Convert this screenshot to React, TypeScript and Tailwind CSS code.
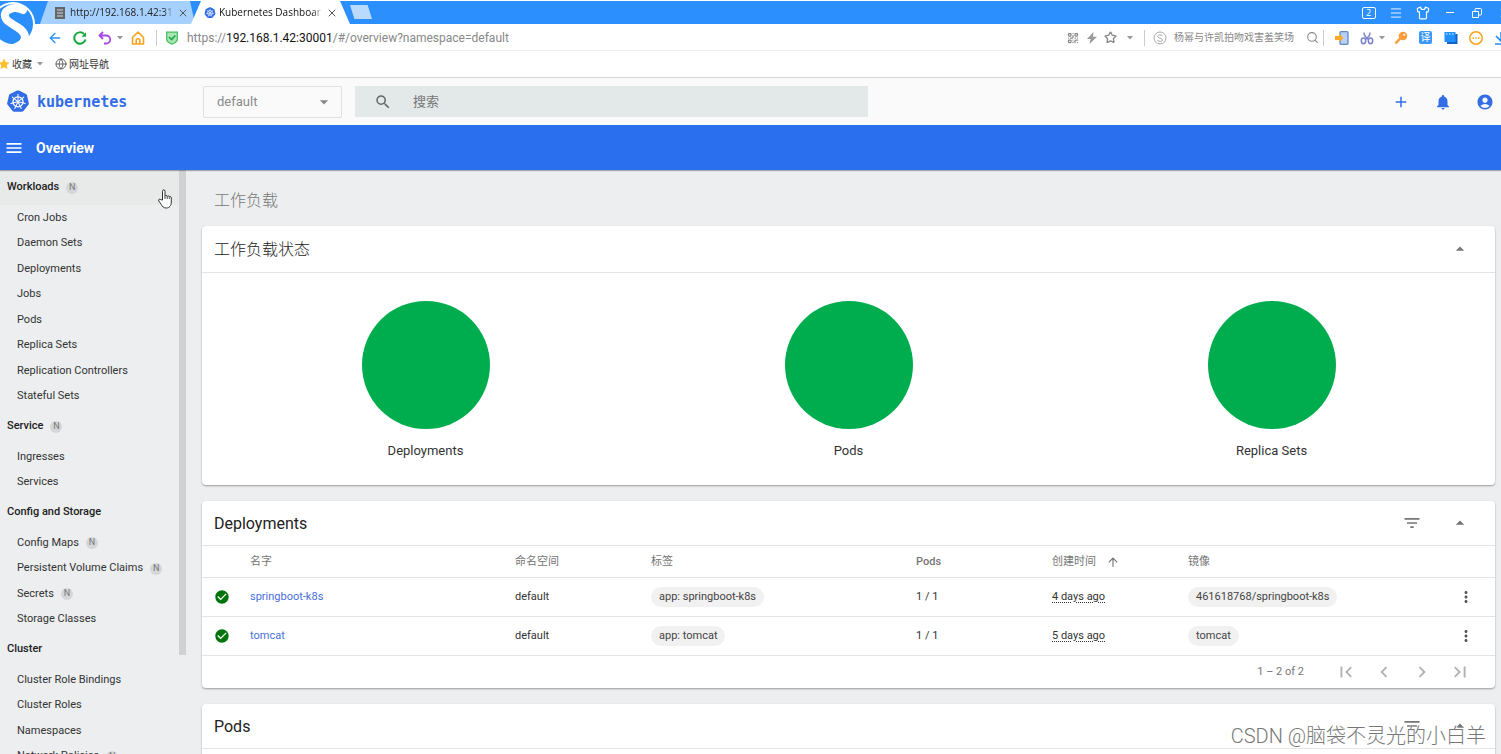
import React from 'react';
import {
  MdAccountCircle,
  MdAdd,
  MdArrowDropDown,
  MdArrowDropUp,
  MdArrowUpward,
  MdCheckCircle,
  MdChevronLeft,
  MdChevronRight,
  MdFilterList,
  MdFirstPage,
  MdLastPage,
  MdMenu,
  MdMoreVert,
  MdNotifications,
  MdSearch,
} from 'react-icons/md';
import { ArrowLeft, Globe, Menu, QrCode, Search, Shirt, Star, X } from 'lucide-react';

const UI_FONT = "font-['Open_Sans','Noto_Sans_CJK_SC',sans-serif]";
const APP_FONT = "font-['Roboto','Noto_Sans_CJK_SC',sans-serif]";

const navGroups = [
  {
    title: 'Workloads',
    badge: true,
    active: true,
    items: [
      { label: 'Cron Jobs' },
      { label: 'Daemon Sets' },
      { label: 'Deployments' },
      { label: 'Jobs' },
      { label: 'Pods' },
      { label: 'Replica Sets' },
      { label: 'Replication Controllers' },
      { label: 'Stateful Sets' },
    ],
  },
  {
    title: 'Service',
    badge: true,
    items: [{ label: 'Ingresses' }, { label: 'Services' }],
  },
  {
    title: 'Config and Storage',
    items: [
      { label: 'Config Maps', badge: true },
      { label: 'Persistent Volume Claims', badge: true },
      { label: 'Secrets', badge: true },
      { label: 'Storage Classes' },
    ],
  },
  {
    title: 'Cluster',
    items: [
      { label: 'Cluster Role Bindings' },
      { label: 'Cluster Roles' },
      { label: 'Namespaces' },
      { label: 'Network Policies', badge: true },
    ],
  },
];

const deployments = [
  { name: 'springboot-k8s', label: 'app: springboot-k8s', age: '4 days ago', image: '461618768/springboot-k8s' },
  { name: 'tomcat', label: 'app: tomcat', age: '5 days ago', image: 'tomcat' },
];

const SPOKES = [0, 51, 103, 154, 206, 257, 309];

const KubeLogo = ({ className }: { className: string }) => (
  <svg viewBox="0 0 24 24" className={className} aria-hidden="true">
    <path
      d="M12 .4c.4 0 .7.1 1 .2l7 3.400c.6.3.9.7 1 1.300l1.800 7.800c.1.6 0 1.200-.4 1.700l-5 6.300c-.4.5-.9.7-1.500.7H8.100c-.6 0-1.100-.2-1.500-.7l-5-6.300c-.4-.5-.5-1.100-.4-1.700L3 5.300c.1-.6.4-1 1-1.300L11 .6c.3-.1.6-.2 1-.2z"
      fill="#326de6"
    />
    <circle cx="12" cy="11.800" r="5" fill="none" stroke="#fff" strokeWidth="1.300" />
    {SPOKES.map((a) => (
      <path key={a} d="M12 10.500V4.400" stroke="#fff" strokeWidth="1" strokeLinecap="round" transform={`rotate(${a} 12 11.800)`} />
    ))}
    <circle cx="12" cy="11.800" r="1.400" fill="#fff" />
  </svg>
);

const BrowserLogo = () => (
  <svg viewBox="0 0 40 48" className="absolute left-0 top-0 z-10 h-12 w-10" aria-hidden="true">
    <circle cx="13" cy="24" r="22" fill="#fff" />
    <circle cx="13" cy="24" r="20" fill="#2b8ffb" />
    <path
      d="M23 10C13 5 1 11 6 19c4 6 19 9 19 18 0 5-4 8-9 10"
      fill="none"
      stroke="#fff"
      strokeWidth="8"
      strokeLinecap="round"
    />
  </svg>
);

const Badge = () => (
  <span className="ml-[7px] flex h-3 w-3 items-center justify-center rounded-full bg-[#d5d6d7] text-[9px] font-normal text-[#777]">
    N
  </span>
);

const Sidebar = () => (
  <aside className="flex w-[186px] shrink-0 overflow-hidden bg-[#eceef0]">
    <nav className="min-w-0 flex-1 text-[11px] text-[#333]">
      {navGroups.map((group) => (
        <div key={group.title}>
          <a
            href="#"
            className={`flex h-[35px] items-center pl-[7px] font-medium text-[#212121] ${group.active ? 'bg-[#e8e9e9]' : ''}`}
          >
            {group.title}
            {group.badge && <Badge />}
          </a>
          <ul>
            {group.items.map((item) => (
              <li key={item.label} className="odd:h-[26px] even:h-[25px]">
                <a href="#" className="flex h-full items-center pl-[17px]">
                  {item.label}
                  {item.badge && <Badge />}
                </a>
              </li>
            ))}
          </ul>
        </div>
      ))}
    </nav>
    <div className="w-[7px]">
      <div className="h-[83%] bg-[#d0d1d3]" />
    </div>
  </aside>
);

const CardHeader = ({ title, filter, tall }: { title: string; filter?: boolean; tall?: boolean }) => (
  <header
    className={`flex items-center border-b border-[#e4e4e4] pl-3 pr-[11px] ${tall ? 'h-[47px] font-light' : 'h-[45px]'}`}
  >
    <h2 className="flex-1 pt-0.5 text-base text-[#222]">{title}</h2>
    {filter && (
      <button aria-label="Filter" className="flex w-12 justify-center text-[#757575]">
        <MdFilterList className="h-5 w-5" />
      </button>
    )}
    <button aria-label="Collapse" className="flex w-12 justify-center text-[#757575]">
      <MdArrowDropUp className="h-5 w-5" />
    </button>
  </header>
);

const Card = ({ children }: { children: React.ReactNode }) => (
  <section className="mb-4 rounded-sm bg-white shadow-[0_1px_2px_rgba(0,0,0,0.35)]">{children}</section>
);

const Chip = ({ children }: { children: React.ReactNode }) => (
  <span className="inline-flex h-5 items-center rounded-full bg-[#f1f1f1] px-2 text-[#444]">{children}</span>
);

const DeploymentsTable = () => (
  <table className="w-full table-fixed text-left text-[11px] text-[#333]">
    <thead>
      <tr className="h-8 border-b border-[#e4e4e4] text-[#757575]">
        <th className="w-12" />
        <th className="pt-0.5 font-normal">名字</th>
        <th className="w-[136px] pt-0.5 font-normal">命名空间</th>
        <th className="pt-0.5 font-normal">标签</th>
        <th className="w-[136px] pt-0.5 font-medium">Pods</th>
        <th className="w-[136px] pt-0.5 font-normal">
          <span className="flex items-center gap-2.5">
            创建时间 <MdArrowUpward className="h-3.5 w-3.5" />
          </span>
        </th>
        <th className="pt-0.5 font-normal">镜像</th>
        <th className="w-[42px]" />
      </tr>
    </thead>
    <tbody>
      {deployments.map((d) => (
        <tr key={d.name} className="h-[39px] border-b border-[#e4e4e4]">
          <td className="pl-3">
            <MdCheckCircle className="h-4 w-4 text-[#00740b]" />
          </td>
          <td>
            <a href="#" className="text-[#4a6fdc]">{d.name}</a>
          </td>
          <td>default</td>
          <td><Chip>{d.label}</Chip></td>
          <td>1 / 1</td>
          <td>
            <span className="underline decoration-dotted underline-offset-2">{d.age}</span>
          </td>
          <td><Chip>{d.image}</Chip></td>
          <td>
            <button aria-label={`Actions for ${d.name}`} className="flex w-[26px] justify-center text-[#555]">
              <MdMoreVert className="h-[18px] w-[18px]" />
            </button>
          </td>
        </tr>
      ))}
    </tbody>
  </table>
);

const Paginator = () => (
  <div className="flex h-8 items-center justify-end pr-4 text-[11px] text-[#757575]">
    <span className="mr-[23px]">1 – 2 of 2</span>
    {[
      { label: 'First page', icon: MdFirstPage },
      { label: 'Previous page', icon: MdChevronLeft },
      { label: 'Next page', icon: MdChevronRight },
      { label: 'Last page', icon: MdLastPage },
    ].map((b) => (
      <button key={b.label} aria-label={b.label} className="flex w-[38px] justify-center text-[#b0b0b0]">
        <b.icon className="h-[22px] w-[22px]" />
      </button>
    ))}
  </div>
);

const TitleBar = () => (
  <div className="flex h-6 overflow-hidden border-t border-white bg-[#2b90fe] pl-10 text-[10px]">
    <div className="flex w-[155px] items-center bg-[#a6d1fe] pl-[15px] text-[#222] [clip-path:polygon(0_100%,8px_0,150px_0,100%_100%)]">
      <svg viewBox="0 0 10 12" className="h-3 w-2.5 shrink-0" aria-hidden="true">
        <path d="M0 0h10v12H0z" fill="#666" />
        <path d="M2 3h6M2 6h6M2 9h6" stroke="#c6dcf2" />
      </svg>
      <span className="ml-[5px] w-[104px] whitespace-nowrap [mask-image:linear-gradient(to_right,#000_90%,transparent)]">
        http://192.168.1.42:31
      </span>
      <button aria-label="Close tab" className="ml-[3px] text-[#555]">
        <X className="h-3 w-3" />
      </button>
    </div>
    <div className="-ml-1 flex w-[159px] items-center bg-white pl-[13px] text-[#111] [clip-path:polygon(0_100%,10px_0,149px_0,100%_100%)]">
      <KubeLogo className="h-3 w-3 shrink-0" />
      <span className="ml-[3px] w-[104px] whitespace-nowrap [mask-image:linear-gradient(to_right,#000_90%,transparent)]">
        Kubernetes Dashboar
      </span>
      <button aria-label="Close tab" className="ml-[3px] text-[#555]">
        <X className="h-3 w-3" />
      </button>
    </div>
    <button
      aria-label="New tab"
      className="mt-1 h-3.5 w-[22px] bg-[#b9dafd] [clip-path:polygon(0_0,80%_0,100%_100%,20%_100%)]"
    />
    <div className="-mr-4 ml-auto flex items-center text-white">
      <span className="flex w-[27px] justify-center">
        <span className="flex h-3 w-3.5 items-center justify-center rounded-xs border border-white text-[9px]">2</span>
      </span>
      <button aria-label="Menu" className="flex w-[27px] justify-center">
        <Menu className="h-3.5 w-3.5" strokeWidth={1.5} />
      </button>
      <button aria-label="Skins" className="flex w-[27px] justify-center">
        <Shirt className="h-3.5 w-3.5" strokeWidth={2} />
      </button>
      <button aria-label="Minimize" className="flex w-[27px] justify-center">
        <span className="h-px w-2 bg-white" />
      </button>
      <button aria-label="Restore" className="flex w-[27px] justify-center">
        <svg viewBox="0 0 10 10" className="h-2.5 w-2.5" fill="none" stroke="#fff">
          <path d="M.5 3.500h6v6h-6zM3 3V1.500Q3 .5 4 .5h4.500q1 0 1 1V6q0 1-1 1H7" />
        </svg>
      </button>
      <button aria-label="Close" className="flex w-[27px] justify-center">
        <X className="h-3 w-3" />
      </button>
    </div>
  </div>
);

const Tool = ({ label, wide, children }: { label: string; wide?: boolean; children: React.ReactNode }) => (
  <button aria-label={label} className={`flex shrink-0 justify-center ${wide ? 'w-[25px]' : 'w-[19px]'}`}>
    {children}
  </button>
);

const Caret = () => (
  <svg viewBox="0 0 6 4" className="h-1 w-1.5 shrink-0" aria-hidden="true">
    <path d="M0 0h6L3 3.500z" fill="#999" />
  </svg>
);

const AddressBar = () => (
  <div className="flex h-[27px] items-center overflow-hidden border-b border-[#ececec] bg-white pl-[42px] pt-px">
    <Tool label="Back" wide>
      <ArrowLeft className="h-4 w-4 text-[#2b90fe]" />
    </Tool>
    <Tool label="Reload" wide>
      <svg viewBox="0 0 14 14" className="h-3.5 w-3.5" fill="none" stroke="#12a83a" strokeWidth="2">
        <path d="M12.500 8.500A5.700 5.700 0 1 1 11 3" />
        <path d="M8.500 5.800H13V1.200z" fill="#12a83a" stroke="none" />
      </svg>
    </Tool>
    <Tool label="Undo" wide>
      <svg viewBox="0 0 14 14" className="h-3.5 w-3.5" fill="none" stroke="#a548e8" strokeWidth="1.800">
        <path d="M5 1 1.500 4.500 5 8M1.500 4.500h6.700a4 4 0 0 1 0 8H6" />
      </svg>
    </Tool>
    <Caret />
    <span className="ml-0.5">
      <Tool label="Home" wide>
        <svg viewBox="0 0 14 14" className="h-3.5 w-3.5" fill="none" stroke="#fba31d" strokeWidth="1.600" strokeLinejoin="round">
          <path d="M1.500 6.500 7 1l5.500 5.500V13h-11zM5.200 13V9.500a1.800 1.800 0 0 1 3.600 0V13" />
        </svg>
      </Tool>
    </span>
    <span className="ml-1.5 h-4 w-px bg-[#ccc]" />
    <svg viewBox="0 0 12 14" className="ml-[9px] h-3.5 w-3 shrink-0" aria-hidden="true">
      <path d="M.7 1.200h10.600V8.500c0 2-2.300 3.500-5.300 4.800C3 12 .7 10.500.7 8.500z" fill="#a8e4b4" stroke="#3fbd5d" strokeWidth="1.200" />
      <path d="m3 6 2.500 2.600L9.300 4.500" fill="none" stroke="#1ea544" strokeWidth="1.600" />
    </svg>
    <span className="ml-[9px] whitespace-nowrap font-['Roboto',sans-serif] text-[12px] text-[#888]">
      https://<span className="text-[#111]">192.168.1.42:30001</span>/#/overview?namespace=default
    </span>
    <div className="-mr-3 ml-auto flex items-center text-[#888]">
      <Tool label="QR code">
        <QrCode className="h-3 w-3" strokeWidth={2.5} />
      </Tool>
      <Tool label="Turbo">
        <svg viewBox="0 0 12 12" className="h-3 w-3">
          <path d="M7.500 0 1 7h3.700L3.500 12 11 4.700H7z" fill="#999" />
        </svg>
      </Tool>
      <Tool label="Bookmark">
        <Star className="h-[13px] w-[13px]" strokeWidth={2.5} />
      </Tool>
      <span className="mx-[7px]">
        <Caret />
      </span>
      <span className="ml-1 h-4 w-px bg-[#ccc]" />
      <svg viewBox="0 0 14 14" className="ml-2 h-3.5 w-3.5 shrink-0" fill="none" stroke="#aaa" aria-hidden="true">
        <circle cx="7" cy="7" r="6" />
        <path d="M9.500 4.700C8 3.500 4.500 3.700 4.500 5.500S9.500 7 9.500 9 6 10.500 4.300 9.300" />
      </svg>
      <input
        aria-label="Web search"
        placeholder="杨幂与许凯拍吻戏害羞笑场"
        className="ml-[7px] w-[132px] bg-transparent text-[10px] outline-none placeholder:text-[#888]"
      />
      <Search className="h-[13px] w-[13px]" strokeWidth={2} />
      <span className="ml-1 mr-[5px] h-4 w-px bg-[#ccc]" />
      <Tool label="Send to phone" wide>
        <svg viewBox="0 0 14 14" className="h-3.5 w-3.5">
          <rect x="5" y=".7" width="8" height="12.600" rx="1" fill="#b9cff0" stroke="#5f88c8" strokeWidth="1.300" />
          <path d="M0 5h4V2.500L8.500 7 4 11V9H0z" fill="#fba92b" />
        </svg>
      </Tool>
      <Tool label="Screenshot" wide>
        <svg viewBox="0 0 14 14" className="h-3.5 w-3.5" fill="none" stroke="#7b80cb" strokeWidth="1.500">
          <path d="M4 1.500C4 4 5 6 8.500 8.500M10 1.500C10 4 9 6 5.500 8.500" />
          <ellipse cx="3.500" cy="9.800" rx="2.200" ry="2.900" />
          <ellipse cx="10.500" cy="9.800" rx="2.200" ry="2.900" />
        </svg>
      </Tool>
      <span className="mr-[3px]">
        <Caret />
      </span>
      <Tool label="Passwords" wide>
        <svg viewBox="0 0 14 14" className="h-3.5 w-3.5">
          <circle cx="9" cy="5" r="4.300" fill="#fb9d3c" />
          <path d="M6.500 7 1.500 12.500" stroke="#fb9d3c" strokeWidth="2.600" />
          <circle cx="10.300" cy="3.700" r="1" fill="#fff" />
        </svg>
      </Tool>
      <button className="mx-1.5 flex h-[13px] w-[13px] shrink-0 items-center justify-center rounded-xs bg-[#3c98f8] text-[10px] text-white">
        译
      </button>
      <Tool label="Windows" wide>
        <svg viewBox="0 0 14 14" className="h-3.5 w-3.5">
          <path d="M3 3h10.500v10H3z" fill="#1264c4" />
          <path d="M.5 1h11v10H.5z" fill="#2090ff" />
          <path d="M2 3h1.500M5 3h1.500M8 3h1.500" stroke="#fff" />
        </svg>
      </Tool>
      <Tool label="More" wide>
        <svg viewBox="0 0 14 14" className="h-3.5 w-3.5" fill="none" stroke="#fba31d" strokeWidth="1.500">
          <circle cx="7" cy="7" r="6.200" />
          <path d="M3.500 7H5M6.300 7h1.500M9 7h1.500" />
        </svg>
      </Tool>
      <Tool label="Downloads" wide>
        <svg viewBox="0 0 14 14" className="h-3.5 w-3.5" fill="none" stroke="#2090ff" strokeWidth="1.600">
          <path d="M7 1v9M2 5l5 5 5-5M1 13h12" />
        </svg>
      </Tool>
    </div>
  </div>
);

const BookmarksBar = () => (
  <div className="flex h-[27px] items-center overflow-hidden border-b border-[#d5d5d5] bg-white text-[10px] text-[#333]">
    <svg viewBox="2 0 10 12" className="h-3 w-2.5" aria-hidden="true">
      <path d="m6 .5 1.700 3.600 3.900.5-2.900 2.700.8 3.900L6 9.300 2.500 11.200l.8-3.900L.4 4.600l3.900-.5z" fill="#fbc02d" />
    </svg>
    <a href="#" className="ml-0.5">收藏</a>
    <span className="ml-[5px]">
      <Caret />
    </span>
    <Globe className="ml-3 h-3 w-3 text-[#666]" strokeWidth={2} />
    <a href="#" className="ml-0.5">网址导航</a>
  </div>
);

const AppHeader = () => (
  <header className="flex h-[47px] shrink-0 items-center bg-[#fafafa]">
    <KubeLogo className="ml-1.5 h-6 w-6 shrink-0" />
    <span className="ml-[7px] w-[166px] shrink-0 pt-0.5 font-['DejaVu_Sans_Mono',monospace] text-[15px] font-bold text-[#326de6]">
      kubernetes
    </span>
    <div className="relative w-[139px] shrink-0">
      <select
        aria-label="Namespace"
        className="h-8 w-full appearance-none rounded-xs border border-[#e0e0e0] bg-[#fafafa] pl-[13px] text-[13px] text-[#8a8a8a]"
      >
        <option>default</option>
      </select>
      <MdArrowDropDown className="pointer-events-none absolute right-2 top-1.5 h-5 w-5 text-[#8a8a8a]" />
    </div>
    <label className="ml-[13px] flex h-[31px] w-[513px] items-center bg-[#e3e8e8] pl-[19px]">
      <MdSearch className="h-[18px] w-[18px] text-[#666]" />
      <input
        aria-label="搜索"
        placeholder="搜索"
        className="ml-[21px] min-w-0 flex-1 bg-transparent text-[13px] outline-none placeholder:text-[#777]"
      />
    </label>
    <div className="ml-auto flex gap-6 pr-[7px] text-[#326de6]">
      <button aria-label="Create"><MdAdd className="h-[18px] w-[18px]" /></button>
      <button aria-label="Notifications"><MdNotifications className="h-[18px] w-[18px]" /></button>
      <button aria-label="Account"><MdAccountCircle className="h-[18px] w-[18px]" /></button>
    </div>
  </header>
);

const HandCursor = () => (
  <svg viewBox="0 0 14 20" className="absolute left-[158px] top-[189px] z-20 h-5 w-3.5" aria-hidden="true">
    <path
      d="M4.500 11V2.200C4.500.3 7 .3 7 2.200v5c.2-1.200 2.200-1 2.200.3.300-1 2.100-.8 2.100.5.400-.8 2-.6 2 .8v4.200c0 3.500-1.800 6-5 6-2.800 0-4-1.500-5-3.500L.8 12c-.8-1.500.9-2.500 2-1.300z"
      fill="#fff"
      stroke="#333"
      strokeWidth="1"
    />
    <path d="M7 7.200V10M9.200 7.700V10M11.300 8.200V10" stroke="#333" strokeWidth=".9" />
  </svg>
);

export default function App() {
  return (
    <div className={`relative flex h-screen flex-col overflow-hidden bg-[#eceef0] ${APP_FONT}`}>
      <div className={UI_FONT}>
        <BrowserLogo />
        <TitleBar />
        <AddressBar />
        <BookmarksBar />
      </div>
      <AppHeader />
      <div className="z-10 flex h-[45px] shrink-0 items-center bg-[#2a6fee] text-white shadow-[0_1px_1px_rgba(0,0,0,0.3)]">
        <button aria-label="Toggle menu" className="ml-1">
          <MdMenu className="h-5 w-5" />
        </button>
        <h1 className="ml-3 text-sm font-bold">Overview</h1>
      </div>
      <div className="flex min-h-0 flex-1">
        <Sidebar />
        <main className="min-w-0 flex-1 overflow-hidden pl-4 pr-1.5">
          <h2 className="flex h-14 items-center pl-3 pt-1.5 text-base font-light text-[#777]">工作负载</h2>
          <Card>
            <CardHeader title="工作负载状态" tall />
            <div className="grid grid-cols-3 px-3 pb-6 pt-7">
              {['Deployments', 'Pods', 'Replica Sets'].map((name) => (
                <figure key={name} className="flex flex-col items-center">
                  <svg viewBox="0 0 128 128" className="h-32 w-32">
                    <circle cx="64" cy="64" r="64" fill="#00ad4e" />
                  </svg>
                  <figcaption className="mt-3 text-[13px] text-[#333]">{name}</figcaption>
                </figure>
              ))}
            </div>
          </Card>
          <Card>
            <CardHeader title="Deployments" filter />
            <DeploymentsTable />
            <Paginator />
          </Card>
          <Card>
            <CardHeader title="Pods" filter />
            <div className="h-40" />
          </Card>
        </main>
      </div>
      <HandCursor />
      <span className="absolute bottom-1 right-[15px] z-20 text-xl font-light leading-7 text-[#777] [text-shadow:0_0_2px_#fff,1px_1px_1px_#fff]">
        CSDN @脑袋不灵光的小白羊
      </span>
    </div>
  );
}
